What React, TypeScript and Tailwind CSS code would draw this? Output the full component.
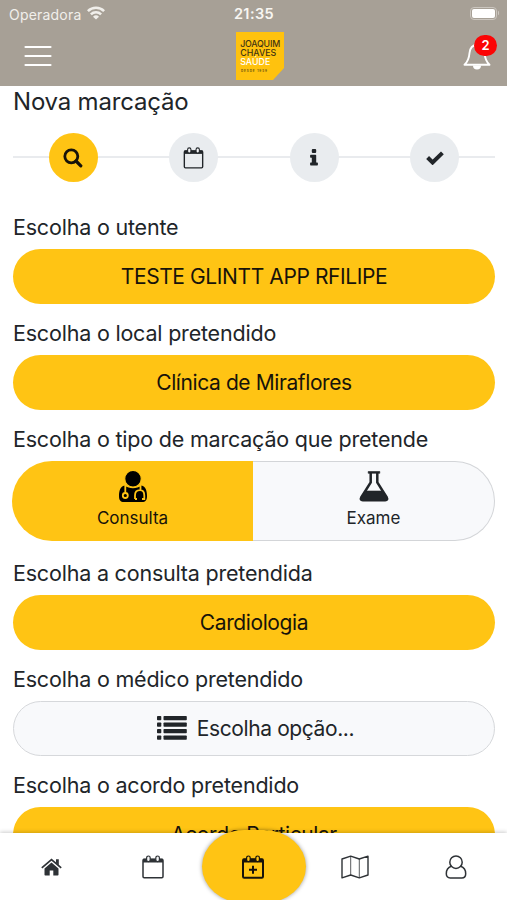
import type { ReactNode } from 'react';

type IconProps = { className?: string };

const MenuIcon = ({ className }: IconProps) => (
  <svg viewBox="0 0 28 22" className={className} stroke="currentColor" strokeWidth="2.2" strokeLinecap="round">
    <path d="M1.5 2h25M1.5 11h25M1.5 20h25" />
  </svg>
);

const WifiIcon = ({ className }: IconProps) => (
  <svg viewBox="0 0 18 14" className={className} fill="none" stroke="currentColor" strokeWidth="2.6">
    <path d="M.9 5.1a11.5 11.5 0 0 1 16.2 0M3.9 8.4a7.3 7.3 0 0 1 10.2 0" />
    <path d="M9 13.6 6 10.7a4.3 4.3 0 0 1 6 0z" fill="currentColor" stroke="none" />
  </svg>
);

const BellIcon = ({ className }: IconProps) => (
  <svg viewBox="0 0 28 28" className={className} fill="none" stroke="currentColor" strokeWidth="1.9" strokeLinejoin="round">
    <path d="M1.5 22.8C5.5 19 6.2 15 6.5 11 7 6 10 3 14 3s7 3 7.5 8c.3 4 1 8 5 11.8z" />
    <path d="M10 23.500h8a4 4 0 0 1-8 0z" fill="currentColor" stroke="none" />
  </svg>
);

const SearchIcon = ({ className }: IconProps) => (
  <svg viewBox="0 0 20 20" className={className} fill="none" stroke="currentColor" strokeWidth="2.8">
    <circle cx="8.3" cy="8.3" r="6.5" />
    <path d="m13 13 4.800 4.800" strokeLinecap="round" strokeWidth="3.2" />
  </svg>
);

const CalendarIcon = ({ className, plus }: IconProps & { plus?: boolean }) => (
  <svg viewBox="0 0 22 24" className={className} fill="none" stroke="currentColor" strokeWidth={plus ? 2 : 1.5}>
    <rect x="1" y="4.2" width="20" height="18.6" rx="1.2" />
    <path d="M1 3.800h20v3.700H1z" fill="currentColor" stroke="none" />
    <rect x="4.600" y="1" width="3.600" height="5.600" rx="1.800" fill={plus ? '#ffc414' : '#f4f5f7'} strokeWidth="1.2" />
    <rect x="13.800" y="1" width="3.600" height="5.600" rx="1.800" fill={plus ? '#ffc414' : '#f4f5f7'} strokeWidth="1.2" />
    {plus && <path d="M11 10.800v8M7 14.800h8" />}
  </svg>
);

const InfoIcon = ({ className }: IconProps) => (
  <svg viewBox="0 0 8 17" className={className} fill="currentColor">
    <rect x="1.8" y="0" width="4.4" height="4" rx="1" />
    <path d="M.8 5.800h4.700a.7.700 0 0 1 .7.700v6.900h1a.7.700 0 0 1 .7.700v1.700a.7.700 0 0 1-.7.700H.8a.7.700 0 0 1-.7-.7v-1.700a.7.700 0 0 1 .7-.7h1V8.800h-1a.7.700 0 0 1-.7-.7V6.500a.7.700 0 0 1 .7-.7z" />
  </svg>
);

const CheckIcon = ({ className }: IconProps) => (
  <svg viewBox="0 0 18 14" className={className} fill="none" stroke="currentColor" strokeWidth="4">
    <path d="m1.600 6.500 5 5L16.400 1.800" />
  </svg>
);

const DoctorIcon = ({ className }: IconProps) => (
  <svg viewBox="0 0 28 31" className={className} fill="none" stroke="#ffc414" strokeWidth="1.8">
    <path d="M5.500 14.500C1.500 15.500 0 19.500 0 25c0 4 1.500 6 5 6h18c3.500 0 5-2 5-6 0-5.500-1.500-9.500-5.500-10.500-5 3.500-12 3.500-17 0z" fill="currentColor" stroke="none" />
    <circle cx="14" cy="7.8" r="8.3" fill="currentColor" strokeWidth="1.2" />
    <path d="M6.300 14v7.500M21.500 14v5M16 28v-3.500c0-3.500 2-5.300 5-5.300s4.300 1.800 4.300 5.300V28H23M16 28h2" />
    <circle cx="6.3" cy="24.5" r="2.5" />
  </svg>
);

const FlaskIcon = ({ className }: IconProps) => (
  <svg viewBox="0 0 30 31" className={className}>
    <path d="M11.700 2v9.500L2.200 26.500c-.9 1.600-.3 2.800 1.500 2.800h22.600c1.800 0 2.400-1.200 1.500-2.800L18.300 11.500V2" fill="none" stroke="currentColor" strokeWidth="2.5" />
    <path d="M6.500 20h17l5 8.500-1 1h-25l-1-1zM9.200.5h11.600v1.800H9.200z" fill="currentColor" stroke="currentColor" strokeWidth=".6" />
  </svg>
);

const ListIcon = ({ className }: IconProps) => (
  <svg viewBox="0 0 30 24" className={className} fill="currentColor">
    {[0, 6.5, 13, 19.5].map((y) => (
      <g key={y}>
        <rect x="0" y={y} width="4.3" height="4.2" rx=".8" />
        <rect x="6.5" y={y} width="23.3" height="4.2" rx=".8" />
      </g>
    ))}
  </svg>
);

const HomeIcon = ({ className }: IconProps) => (
  <svg viewBox="0 0 21 18" className={className} fill="currentColor">
    <path d="m10.500 4.500 7 6v6.300a.8.800 0 0 1-.8.800h-4.400v-5.200H8.700v5.200H4.300a.8.800 0 0 1-.8-.8v-6.300z" />
    <path d="m.8 9.800 9.700-8.300 9.700 8.300" fill="none" stroke="currentColor" strokeWidth="1.7" />
    <path d="M15 1.200h2.800v6L15 4.800z" />
  </svg>
);

const MapIcon = ({ className }: IconProps) => (
  <svg viewBox="0 0 28 24" className={className} fill="none" stroke="currentColor" strokeWidth="1.4" strokeLinejoin="round">
    <path d="m1 4 8.700-2.800L18.300 4 27 1.200v18.800l-8.700 2.800-8.600-2.800L1 22.800z" />
    <path d="M9.700 1.200V20M18.300 4v18.800" strokeWidth=".8" />
  </svg>
);

const UserIcon = ({ className }: IconProps) => (
  <svg viewBox="0 0 22 24" className={className} fill="none" stroke="currentColor" strokeWidth="1.5">
    <circle cx="11" cy="7.2" r="6.2" />
    <path d="M6.300 11.300c-3.100 1-5 4-5 7.500C1.300 21.300 2.700 23 5.200 23h11.600c2.500 0 3.900-1.700 3.900-4.200 0-3.500-1.900-6.500-5-7.500" />
  </svg>
);

const Logo = ({ className }: IconProps) => (
  <svg viewBox="0 0 48 48" className={className} fontFamily="Inter, sans-serif" fontSize="8.8">
    <path d="M0 0h48v36L37 48H0z" fill="#ffc20e" />
    <g fill="#3f3413" fontWeight="500">
      <text x="4.2" y="14.5" textLength="40">JOAQUIM</text>
      <text x="4.2" y="23.5" textLength="36">CHAVES</text>
      <text x="4.2" y="32.7" textLength="30" fill="#fff">SAÚDE</text>
    </g>
    <text x="5" y="39.8" textLength="26" fontSize="3" fontWeight="700" fill="#6b5510">DESDE 1959</text>
  </svg>
);

const steps = [
  { icon: <SearchIcon className="h-5 w-5" />, active: true },
  { icon: <CalendarIcon className="h-[22px] w-[21px]" /> },
  { icon: <InfoIcon className="h-[17px] w-2" /> },
  { icon: <CheckIcon className="h-3.5 w-[18px]" /> },
];

const Field = ({ label, children }: { label: string; children: ReactNode }) => (
  <section>
    <h2 className="flex h-[51.5px] items-center pt-[7px] text-[21.5px] tracking-[-0.2px] whitespace-nowrap">{label}</h2>
    {children}
  </section>
);

const Pill = ({ children }: { children: ReactNode }) => (
  <button className="flex h-[54.5px] w-full items-center justify-center rounded-full bg-[#ffc414] text-[21px] tracking-[-0.4px] text-[#17130a]">
    {children}
  </button>
);

export default function App() {
  return (
    <div className="flex h-[900px] w-[507px] flex-col overflow-hidden bg-white font-['Inter',sans-serif] text-[#212529]">
      <header className="h-[86px] shrink-0 bg-[#a7a096] text-white">
        <div className="grid h-7 grid-cols-3 items-center pr-2 pl-[9px] text-[14px]">
          <div className="flex items-center gap-1.5 text-[#f1efeb]">
            <span className="tracking-[0.2px]">Operadora</span>
            <WifiIcon className="mb-0.5 h-3.5 w-[18px]" />
          </div>
          <span className="text-center text-[14.5px] font-semibold tracking-[0.4px] text-[#f8f6f2]">21:35</span>
          <div className="mb-0.5 flex items-center justify-end gap-px">
            <div className="h-[13px] w-[27px] rounded-[4px] border border-[#cbc6bf] p-px">
              <div className="h-full rounded-[2px] bg-white" />
            </div>
            <div className="h-1 w-px rounded-r bg-[#cbc6bf]" />
          </div>
        </div>
        <div className="grid h-14 grid-cols-3 items-center pr-3 pl-6">
          <MenuIcon className="h-[22px] w-7" />
          <Logo className="ml-[55px] h-12 w-12" />
          <div className="relative mr-1 h-7 w-7 justify-self-end">
            <BellIcon className="h-7 w-7" />
            <span className="absolute -top-[7px] left-[11px] flex h-[21px] w-[23px] items-center justify-center rounded-full bg-[#fb0505] text-[13px] font-semibold">
              2
            </span>
          </div>
        </div>
      </header>

      <main className="min-h-0 flex-1 overflow-hidden pr-3 pl-[13px]">
        <h1 className="h-[47px] pt-px text-[24px] leading-[30px] tracking-[-0.2px] whitespace-nowrap">Nova marcação</h1>
        <div className="relative grid h-[49px] grid-cols-4 justify-items-center">
          <div className="absolute inset-x-0 top-[23px] h-[2px] bg-[#e9ebee]" />
          {steps.map((step, index) => (
            <div
              key={index}
              className={`relative flex h-[49px] w-[49px] items-center justify-center rounded-full ${
                step.active ? 'bg-[#ffc414] text-[#17130a]' : 'bg-[#e9ecef]'
              }`}
            >
              {step.icon}
            </div>
          ))}
        </div>

        <div className="mt-[15.5px]">
          <Field label="Escolha o utente">
            <Pill>TESTE GLINTT APP RFILIPE</Pill>
          </Field>
          <Field label="Escolha o local pretendido">
            <Pill>Clínica de Miraflores</Pill>
          </Field>
          <Field label="Escolha o tipo de marcação que pretende">
            <div className="mb-[2.5px] -ml-px flex h-[80px] text-[17px]">
              <button className="flex flex-1 flex-col items-center rounded-l-[40px] bg-[#ffc414] pt-[10px] text-[#17130a]">
                <DoctorIcon className="h-[31px] w-7 text-black" />
                <span className="mt-1">Consulta</span>
              </button>
              <button className="flex flex-1 flex-col items-center rounded-r-[40px] border border-l-0 border-[#d3d5d8] bg-[#f8f9fb] pt-[9px]">
                <FlaskIcon className="h-[31px] w-[30px]" />
                <span className="mt-1">Exame</span>
              </button>
            </div>
          </Field>
          <Field label="Escolha a consulta pretendida">
            <Pill>Cardiologia</Pill>
          </Field>
          <Field label="Escolha o médico pretendido">
            <button className="flex h-[54.5px] w-full items-center justify-center gap-2.5 rounded-full border border-[#d6d8db] bg-[#f8f9fb] pl-[3px] text-[21px] tracking-[-0.4px]">
              <ListIcon className="h-6 w-[30px]" />
              Escolha opção...
            </button>
          </Field>
          <Field label="Escolha o acordo pretendido">
            <Pill>Acordo Particular</Pill>
          </Field>
        </div>
      </main>

      <nav className="relative grid h-[67px] shrink-0 grid-cols-5 items-center justify-items-center bg-white pl-px text-[#2e3236] shadow-[0_-1px_4px_rgba(0,0,0,0.2)]">
        <HomeIcon className="h-[18px] w-[21px]" />
        <CalendarIcon className="h-6 w-[22px]" />
        <button className="-my-1 flex h-[73px] w-[104px] items-center justify-center rounded-[42px/50%] bg-[#ffc414] pr-0.5 text-[#17130a] shadow-[0_0_4px_rgba(0,0,0,0.4)]">
          <CalendarIcon plus className="h-6 w-[22px]" />
        </button>
        <MapIcon className="h-6 w-7" />
        <UserIcon className="h-6 w-[22px]" />
      </nav>
    </div>
  );
}
